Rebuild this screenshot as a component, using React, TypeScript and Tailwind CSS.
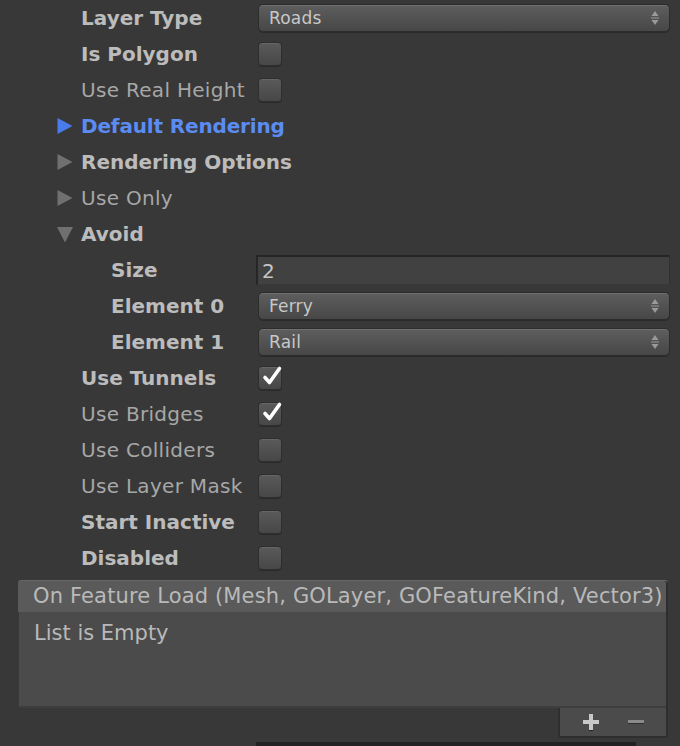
import React from "react";

const font = { fontFamily: '"DejaVu Sans", "Lucida Grande", sans-serif' };

function Arrows() {
  return (
    <svg width="10" height="16" viewBox="0 0 10 16" className="shrink-0">
      <path d="M5 1 L8.5 6 L1.5 6 Z" fill="#9a9a9a" />
      <rect x="1" y="7.5" width="8" height="1" fill="#9a9a9a" />
      <path d="M5 15 L8.5 10 L1.5 10 Z" fill="#9a9a9a" />
    </svg>
  );
}

function Dropdown({ value }: { value: string }) {
  return (
    <div className="flex-1 h-[28px] rounded-[5px] border border-[#2c2c2c] bg-gradient-to-b from-[#5e5e5e] to-[#474747] shadow-[inset_0_1px_0_#707070,0_1px_0_#2a2a2a] flex items-center justify-between pl-[10px] pr-[9px]">
      <span className="text-[17px] text-[#c8c8c8] leading-none tracking-[0.2px]">{value}</span>
      <Arrows />
    </div>
  );
}

function Checkbox({ checked }: { checked?: boolean }) {
  return (
    <div className="relative w-[24px] h-[24px] rounded-[4px] border border-[#2e2e2e] bg-gradient-to-b from-[#5a5a5a] to-[#474747] shadow-[inset_0_1px_0_#666,0_1px_0_#2b2b2b]">
      {checked && (
        <svg width="24" height="24" viewBox="0 0 24 24" className="absolute left-[1px] -top-[3px]">
          <path d="M5 13.5 L9.5 18.5 L19.5 4.5" fill="none" stroke="#ffffff" strokeWidth="3.6" strokeLinecap="round" strokeLinejoin="round" />
        </svg>
      )}
    </div>
  );
}

function Tri({ dir, color }: { dir: "right" | "down"; color: string }) {
  return (
    <svg width="16" height="16" viewBox="0 0 16 16" className="shrink-0">
      {dir === "right" ? (
        <path d="M0.5 0 L15.5 8 L0.5 16 Z" fill={color} />
      ) : (
        <path d="M0 1 L16 1 L8 16.5 Z" fill={color} />
      )}
    </svg>
  );
}

type RowProps = {
  label: string;
  bold?: boolean;
  indent?: number;
  children?: React.ReactNode;
};

function Row({ label, bold, indent = 0, children }: RowProps) {
  return (
    <div className="h-[36px] flex items-center pr-[10px]">
      <div
        className={
          "w-[258px] shrink-0 text-[20px] leading-none whitespace-nowrap " +
          (bold ? "font-bold text-[#bcbcbc]" : "text-[#a7a7a7] tracking-[0.3px]")
        }
        style={{ paddingLeft: 81 + indent * 30 }}
      >
        {label}
      </div>
      <div className="flex-1 flex items-center">{children}</div>
    </div>
  );
}

function FoldRow({ label, open, blue, bold }: { label: string; open?: boolean; blue?: boolean; bold?: boolean }) {
  return (
    <div className="h-[36px] flex items-center pl-[57px] gap-[8px]">
      <Tri dir={open ? "down" : "right"} color={blue ? "#4a7bea" : "#707070"} />
      <span
        className={
          "text-[20px] leading-none whitespace-nowrap " +
          (blue
            ? "font-bold text-[#5b8cf3] tracking-[-0.15px]"
            : bold
            ? "font-bold text-[#bcbcbc]"
            : "text-[#a7a7a7] tracking-[0.3px]")
        }
      >
        {label}
      </span>
    </div>
  );
}

export default function App() {
  return (
    <div className="w-[680px] h-[746px] bg-[#383838] overflow-hidden relative" style={font}>
      <div className="flex flex-col">
        <Row label="Layer Type" bold>
          <Dropdown value="Roads" />
        </Row>
        <Row label="Is Polygon" bold>
          <Checkbox />
        </Row>
        <Row label="Use Real Height">
          <Checkbox />
        </Row>
        <FoldRow label="Default Rendering" blue />
        <FoldRow label="Rendering Options" bold />
        <FoldRow label="Use Only" />
        <FoldRow label="Avoid" open bold />
        <Row label="Size" bold indent={1}>
          <div className="flex-1 -ml-[2px] h-[30px] bg-[#414141] border-t-[2px] border-l-[2px] border-[#262626] border-r border-b border-r-[#303030] border-b-[#3a3a3a] flex items-center pl-[4px]">
            <span className="text-[20px] text-[#c6c6c6] leading-none">2</span>
          </div>
        </Row>
        <Row label="Element 0" bold indent={1}>
          <Dropdown value="Ferry" />
        </Row>
        <Row label="Element 1" bold indent={1}>
          <Dropdown value="Rail" />
        </Row>
        <Row label="Use Tunnels" bold>
          <Checkbox checked />
        </Row>
        <Row label="Use Bridges">
          <Checkbox checked />
        </Row>
        <Row label="Use Colliders">
          <Checkbox />
        </Row>
        <Row label="Use Layer Mask">
          <Checkbox />
        </Row>
        <Row label="Start Inactive" bold>
          <Checkbox />
        </Row>
        <Row label="Disabled" bold>
          <Checkbox />
        </Row>

        <div className="mt-[4px] ml-[18px] w-[650px] flex flex-col">
          <div className="h-[32px] bg-[#5a5a5a] rounded-t-[3px] border-t border-[#666] flex items-center pl-[15px] overflow-hidden shadow-[inset_-2px_0_0_#2e2e2e]">
            <span className="text-[21px] leading-none text-[#b9b9b9] whitespace-nowrap tracking-[0.15px]">
              On Feature Load (Mesh, GOLayer, GOFeatureKind, Vector3)
            </span>
          </div>
          <div className="h-[96px] bg-[#4b4b4b] border-l border-[#3a3a3a] shadow-[inset_-2px_0_0_#2e2e2e,inset_0_-2px_0_#3e3e3e] pl-[15px] pt-[11px]">
            <span className="text-[21px] leading-none text-[#b9b9b9] whitespace-nowrap">List is Empty</span>
          </div>
          <div className="flex justify-end">
            <div className="w-[110px] h-[30px] bg-[#4b4b4b] border-x-[2px] border-b-[2px] border-[#2e2e2e] rounded-b-[3px] flex items-center justify-around px-[8px]">
              <svg width="18" height="18" viewBox="0 0 18 18">
                <rect x="7" y="1" width="4" height="16" fill="#c8c8c8" />
                <rect x="1" y="7" width="16" height="4" fill="#c8c8c8" />
                <rect x="7" y="17" width="4" height="1" fill="#202020" />
              </svg>
              <svg width="18" height="18" viewBox="0 0 18 18">
                <rect x="1" y="7" width="16" height="3" fill="#8a8a8a" />
                <rect x="1" y="10" width="16" height="1" fill="#303030" />
              </svg>
            </div>
          </div>
        </div>
      </div>
      <div className="absolute left-[256px] top-[742px] w-[380px] h-[4px] bg-[#222]" />
    </div>
  );
}
